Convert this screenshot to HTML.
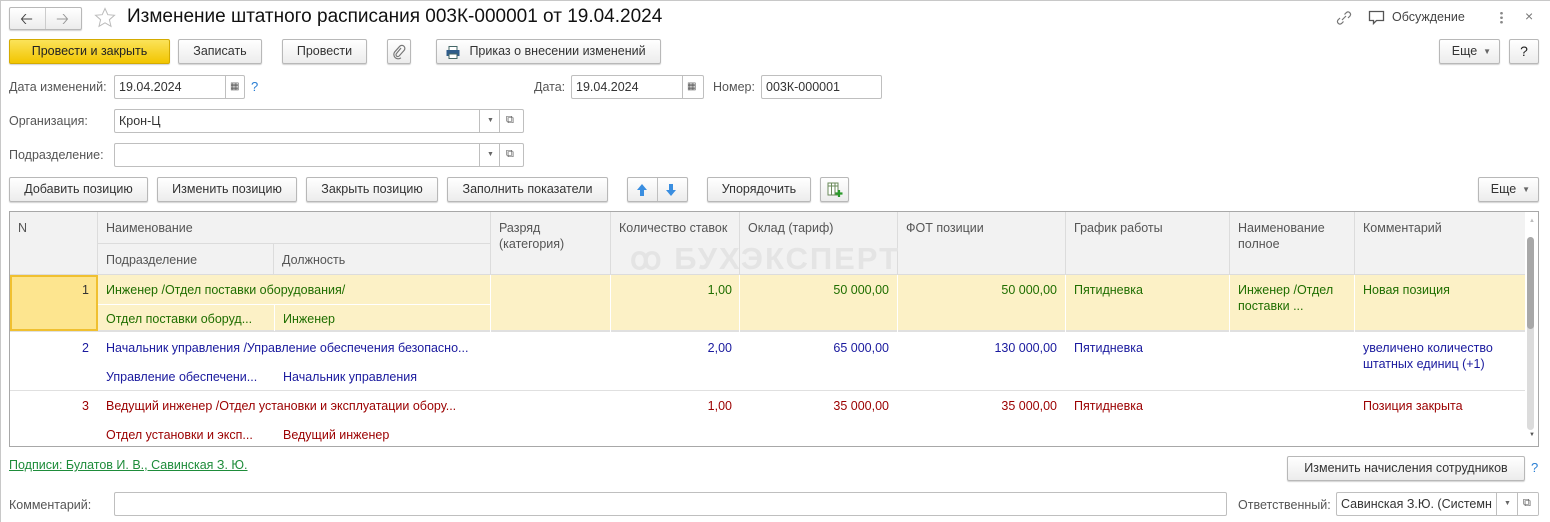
<!DOCTYPE html>
<html><head><meta charset="utf-8"><style>
*{box-sizing:border-box;margin:0;padding:0}
body{width:1550px;height:522px;overflow:hidden;background:#fff;font-family:"Liberation Sans",Arial,sans-serif;font-size:12px;color:#4d4d4d;position:relative}
.a{position:absolute;white-space:nowrap}
.btn{position:absolute;height:25px;border:1px solid #b8b8b8;border-radius:2px;background:linear-gradient(#fff,#ececec);box-shadow:0 1px 1px rgba(0,0,0,.18);color:#333;text-align:center;line-height:23px;font-size:12.5px}
.inp{position:absolute;height:24px;border:1px solid #bfbfbf;border-radius:2px;background:#fff;color:#333;line-height:22px;padding-left:4px;font-size:12.5px}
.lbl{position:absolute;color:#555;font-size:12.5px;white-space:nowrap}
.sep{position:absolute;top:0;bottom:0;border-left:1px solid #bfbfbf}
.hd{position:absolute;background:#f2f2f2;border-right:1px solid #dcdcdc;border-bottom:1px solid #dcdcdc;color:#555;padding:8px 8px;line-height:16px;font-size:12.5px}
.c{position:absolute;font-size:12.5px;white-space:nowrap;line-height:16px}
.g{color:#1f6e00}.b{color:#1a1a9e}.r{color:#9b0000}
</style></head><body>
<div style="position:absolute;left:0;top:0;width:1550px;height:522px;border-left:1px solid #c8c8c8;border-top:1px solid #c8c8c8"></div>
<div class="btn" style="left:9px;top:7px;width:73px;height:23px;"></div>
<div class="a" style="left:45px;top:8px;height:21px;border-left:1px solid #ccc"></div>
<div class="a" style="left:20px;top:8px;font-size:16px;color:#444">&#129120;</div>
<div class="a" style="left:56px;top:8px;font-size:16px;color:#999">&#129122;</div>
<svg class="a" style="left:94px;top:7px" width="22" height="22" viewBox="0 0 22 22"><path d="M11 1.5l2.8 6.2 6.7.6-5.1 4.4 1.6 6.6L11 15.8l-6 3.5 1.6-6.6L1.5 8.3l6.7-.6z" fill="none" stroke="#bbb" stroke-width="1"/></svg>
<div class="a" style="left:127px;top:6px;font-size:19px;color:#111">Изменение штатного расписания 003К-000001 от 19.04.2024</div>
<svg class="a" style="left:1335px;top:10px" width="18" height="16" viewBox="0 0 18 16"><path d="M7 10l4-4M5 8l-2 2a2.5 2.5 0 003.5 3.5l2-2M13 8l2-2a2.5 2.5 0 00-3.5-3.5l-2 2" fill="none" stroke="#777" stroke-width="1.2"/></svg>
<svg class="a" style="left:1368px;top:10px" width="18" height="16" viewBox="0 0 18 16"><path d="M1.5 1.5h14v9h-7l-3 3v-3h-4z" fill="none" stroke="#555" stroke-width="1.3"/></svg>
<div class="a" style="left:1392px;top:10px;font-size:12.5px;color:#444">Обсуждение</div>
<div class="a" style="left:1500px;top:11px;width:3px;height:14px;background:radial-gradient(circle,#888 1.2px,transparent 1.5px) 0 0/3px 4.5px"></div>
<div class="a" style="left:1525px;top:8px;font-size:14px;color:#777">×</div>
<div class="btn" style="left:9px;top:39px;width:161px;background:linear-gradient(#fbe35a,#f2c500);border-color:#d4ab00;color:#222">Провести и закрыть</div>
<div class="btn" style="left:178px;top:39px;width:84px">Записать</div>
<div class="btn" style="left:282px;top:39px;width:85px">Провести</div>
<div class="btn" style="left:387px;top:39px;width:24px"><svg width="14" height="16" viewBox="0 0 14 16" style="margin-top:4px"><path d="M9 4L4.5 9.5a1.8 1.8 0 002.6 2.5L12 6.5a3 3 0 00-4.3-4.2L2.8 7.8a4.3 4.3 0 006.1 6" fill="none" stroke="#777" stroke-width="1.2"/></svg></div>
<div class="btn" style="left:436px;top:39px;width:225px;padding-left:18px">Приказ о внесении изменений
<svg style="position:absolute;left:9px;top:6px" width="14" height="13" viewBox="0 0 14 13"><rect x="3" y="0.5" width="8" height="4" fill="#fff" stroke="#466" /><rect x="0.5" y="4" width="13" height="6" fill="#2f5c8a"/><rect x="3" y="8" width="8" height="4.5" fill="#fff" stroke="#466"/></svg></div>
<div class="btn" style="left:1439px;top:39px;width:61px;padding-right:10px">Еще<span style="position:absolute;right:8px;top:0;font-size:8px;color:#666">▼</span></div>
<div class="btn" style="left:1509px;top:39px;width:30px;font-size:14px;color:#222">?</div>
<div class="lbl" style="left:9px;top:80px">Дата изменений:</div>
<div class="inp" style="left:114px;top:75px;width:131px">19.04.2024<div class="sep" style="left:110px"></div><span style="position:absolute;left:115px;top:0;font-size:10px;color:#555">▦</span></div>
<div class="a" style="left:251px;top:79px;color:#2a7fd4;font-size:13px">?</div>
<div class="lbl" style="left:534px;top:80px">Дата:</div>
<div class="inp" style="left:571px;top:75px;width:133px">19.04.2024<div class="sep" style="left:110px"></div><span style="position:absolute;left:115px;top:0;font-size:10px;color:#555">▦</span></div>
<div class="lbl" style="left:713px;top:80px">Номер:</div>
<div class="inp" style="left:761px;top:75px;width:121px">003К-000001</div>
<div class="lbl" style="left:9px;top:114px">Организация:</div>
<div class="inp" style="left:114px;top:109px;width:410px">Крон-Ц<div class="sep" style="left:364px"></div><div class="sep" style="left:384px"></div><span style="position:absolute;left:372px;top:0;font-size:7px;color:#666">▼</span><span style="position:absolute;left:391px;top:-1px;font-size:11px;color:#555">⧉</span></div>
<div class="lbl" style="left:9px;top:148px">Подразделение:</div>
<div class="inp" style="left:114px;top:143px;width:410px"><div class="sep" style="left:364px"></div><div class="sep" style="left:384px"></div><span style="position:absolute;left:372px;top:0;font-size:7px;color:#666">▼</span><span style="position:absolute;left:391px;top:-1px;font-size:11px;color:#555">⧉</span></div>
<div class="btn" style="left:9px;top:177px;width:139px">Добавить позицию</div>
<div class="btn" style="left:157px;top:177px;width:140px">Изменить позицию</div>
<div class="btn" style="left:306px;top:177px;width:132px">Закрыть позицию</div>
<div class="btn" style="left:447px;top:177px;width:161px">Заполнить показатели</div>
<div class="btn" style="left:627px;top:177px;width:61px"><div class="sep" style="left:29px"></div>
<svg style="position:absolute;left:8px;top:5px" width="12" height="14" viewBox="0 0 12 14"><path d="M6 1L1 7h3v6h4V7h3z" fill="#3a8ee0"/></svg>
<svg style="position:absolute;left:37px;top:5px" width="12" height="14" viewBox="0 0 12 14"><path d="M6 13L1 7h3V1h4v6h3z" fill="#3a8ee0"/></svg></div>
<div class="btn" style="left:707px;top:177px;width:104px">Упорядочить</div>
<div class="btn" style="left:820px;top:177px;width:29px"><svg style="margin-top:4px" width="16" height="16" viewBox="0 0 16 16"><rect x="1" y="1" width="10" height="12" fill="#fff" stroke="#6a8a5a"/><path d="M1 4h10M4.5 1v12M8 1v12" stroke="#6a8a5a"/><path d="M12 8v7M8.5 11.5h7" stroke="#2a9a2a" stroke-width="2.2"/></svg></div>
<div class="btn" style="left:1478px;top:177px;width:61px;padding-right:10px">Еще<span style="position:absolute;right:8px;top:0;font-size:8px;color:#666">▼</span></div>
<div style="position:absolute;left:9px;top:211px;width:1530px;height:236px;border:1px solid #a8a8a8;overflow:hidden">
 <div class="hd" style="left:0;top:0;width:88px;height:63px">N</div>
 <div class="hd" style="left:88px;top:0;width:393px;height:32px">Наименование</div>
 <div class="hd" style="left:88px;top:32px;width:176px;height:31px">Подразделение</div>
 <div class="hd" style="left:264px;top:32px;width:217px;height:31px">Должность</div>
 <div class="hd" style="left:481px;top:0;width:120px;height:63px">Разряд<br>(категория)</div>
 <div class="hd" style="left:601px;top:0;width:129px;height:63px">Количество ставок</div>
 <div class="hd" style="left:730px;top:0;width:158px;height:63px">Оклад (тариф)</div>
 <div class="hd" style="left:888px;top:0;width:168px;height:63px">ФОТ позиции</div>
 <div class="hd" style="left:1056px;top:0;width:164px;height:63px">График работы</div>
 <div class="hd" style="left:1220px;top:0;width:125px;height:63px">Наименование<br>полное</div>
 <div class="hd" style="left:1345px;top:0;width:170px;height:63px;border-right:none">Комментарий</div>
 <div class="a" style="left:620px;top:29px;font-size:31px;font-weight:bold;color:#e4e4e4;letter-spacing:2px">ꝏ БУХЭКСПЕРТ</div>
 <div style="position:absolute;left:0;top:63px;width:1515px;height:57px;background:#fcf1c6;border-bottom:2px solid #e0e0e0"></div>
 <div style="position:absolute;left:0;top:63px;width:88px;height:56px;background:#fde58f;border:2px solid #f0c030"></div>
 <div style="position:absolute;left:88px;top:92px;width:393px;border-top:1px solid #fff"></div>
 <div style="position:absolute;left:264px;top:92px;height:27px;border-left:1px solid #fff"></div>
 <div style="position:absolute;left:480px;top:63px;height:57px;border-left:1px solid #fff"></div>
 <div style="position:absolute;left:600px;top:63px;height:57px;border-left:1px solid #fff"></div>
 <div style="position:absolute;left:729px;top:63px;height:57px;border-left:1px solid #fff"></div>
 <div style="position:absolute;left:887px;top:63px;height:57px;border-left:1px solid #fff"></div>
 <div style="position:absolute;left:1055px;top:63px;height:57px;border-left:1px solid #fff"></div>
 <div style="position:absolute;left:1219px;top:63px;height:57px;border-left:1px solid #fff"></div>
 <div style="position:absolute;left:1344px;top:63px;height:57px;border-left:1px solid #fff"></div>
 <div class="c g" style="left:0;width:79px;text-align:right;top:70px;color:#333">1</div>
 <div class="c g" style="left:96px;top:70px">Инженер /Отдел поставки оборудования/</div>
 <div class="c g" style="left:96px;top:99px">Отдел поставки оборуд...</div>
 <div class="c g" style="left:273px;top:99px">Инженер</div>
 <div class="c g" style="left:601px;width:121px;text-align:right;top:70px">1,00</div>
 <div class="c g" style="left:730px;width:149px;text-align:right;top:70px">50 000,00</div>
 <div class="c g" style="left:888px;width:159px;text-align:right;top:70px">50 000,00</div>
 <div class="c g" style="left:1064px;top:70px">Пятидневка</div>
 <div class="c g" style="left:1228px;top:70px">Инженер /Отдел<br>поставки ...</div>
 <div class="c g" style="left:1353px;top:70px">Новая позиция</div>
 <div style="position:absolute;left:0;top:178px;width:1515px;border-top:1px solid #e0e0e0"></div>
 <div class="c b" style="left:0;width:79px;text-align:right;top:128px">2</div>
 <div class="c b" style="left:96px;top:128px">Начальник управления /Управление обеспечения безопасно...</div>
 <div class="c b" style="left:96px;top:157px">Управление обеспечени...</div>
 <div class="c b" style="left:273px;top:157px">Начальник управления</div>
 <div class="c b" style="left:601px;width:121px;text-align:right;top:128px">2,00</div>
 <div class="c b" style="left:730px;width:149px;text-align:right;top:128px">65 000,00</div>
 <div class="c b" style="left:888px;width:159px;text-align:right;top:128px">130 000,00</div>
 <div class="c b" style="left:1064px;top:128px">Пятидневка</div>
 <div class="c b" style="left:1353px;top:128px">увеличено количество<br>штатных единиц (+1)</div>
 <div class="c r" style="left:0;width:79px;text-align:right;top:186px">3</div>
 <div class="c r" style="left:96px;top:186px">Ведущий инженер /Отдел установки и эксплуатации обору...</div>
 <div class="c r" style="left:96px;top:215px">Отдел установки и эксп...</div>
 <div class="c r" style="left:273px;top:215px">Ведущий инженер</div>
 <div class="c r" style="left:601px;width:121px;text-align:right;top:186px">1,00</div>
 <div class="c r" style="left:730px;width:149px;text-align:right;top:186px">35 000,00</div>
 <div class="c r" style="left:888px;width:159px;text-align:right;top:186px">35 000,00</div>
 <div class="c r" style="left:1064px;top:186px">Пятидневка</div>
 <div class="c r" style="left:1353px;top:186px">Позиция закрыта</div>
 <div style="position:absolute;left:1515px;top:0;width:14px;height:234px;background:#fff"></div>
 <div class="a" style="left:1519px;top:6px;font-size:6px;color:#bbb">▲</div>
 <div style="position:absolute;left:1517px;top:25px;width:7px;height:193px;background:#dcdcdc;border-radius:4px"></div>
 <div style="position:absolute;left:1517px;top:25px;width:7px;height:92px;background:#a8a8a8;border-radius:4px"></div>
 <div class="a" style="left:1519px;top:220px;font-size:6px;color:#555">▼</div>
</div>
<div class="a" style="left:9px;top:458px;font-size:12.5px;color:#1e8c3a;text-decoration:underline">Подписи: Булатов И. В., Савинская З. Ю.</div>
<div class="btn" style="left:1287px;top:456px;width:238px">Изменить начисления сотрудников</div>
<div class="a" style="left:1531px;top:460px;color:#2a7fd4;font-size:13px">?</div>
<div class="lbl" style="left:9px;top:498px">Комментарий:</div>
<div class="inp" style="left:114px;top:492px;width:1113px"></div>
<div class="lbl" style="left:1238px;top:498px">Ответственный:</div>
<div class="inp" style="left:1336px;top:492px;width:203px;overflow:hidden">Савинская З.Ю. (Системн<div style="position:absolute;left:160px;top:0;width:42px;height:22px;background:#fff"></div><div class="sep" style="left:159px"></div><div class="sep" style="left:180px"></div><span style="position:absolute;left:167px;top:0;font-size:7px;color:#666">▼</span><span style="position:absolute;left:186px;top:-1px;font-size:11px;color:#555">⧉</span></div>
</body></html>
